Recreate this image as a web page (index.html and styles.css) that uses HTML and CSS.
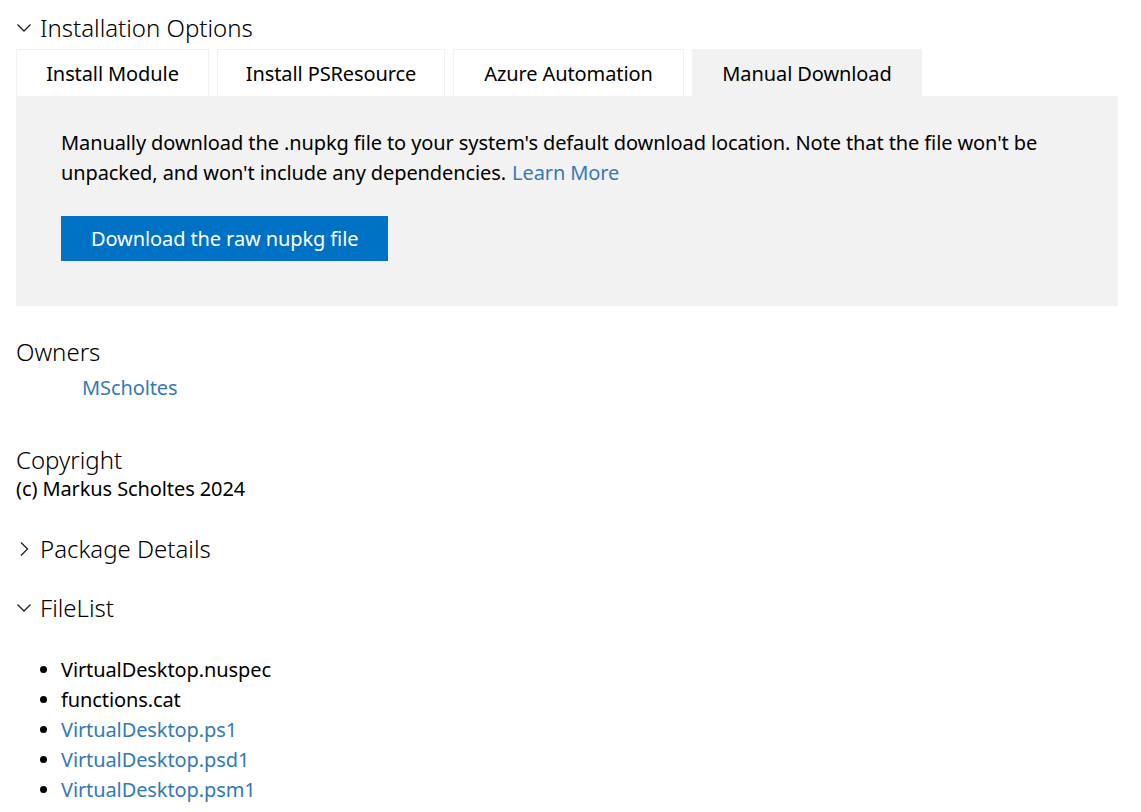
FILE: index.html
```html
<!DOCTYPE html>
<html lang="en">
<head>
<meta charset="utf-8">
<title>VirtualDesktop</title>
<link rel="stylesheet" href="styles.css">
</head>
<body>
  <h2 class="toggle first">
    <svg class="chev" width="16" height="16" viewBox="0 0 16 16"><path d="M1.5 4.5 L8 11 L14.5 4.5" /></svg>
    <span>Installation Options</span>
  </h2>
  <div class="tabs">
    <div class="tab t1">Install Module</div>
    <div class="tab t2">Install PSResource</div>
    <div class="tab t3">Azure Automation</div>
    <div class="tab t4 active">Manual Download</div>
  </div>
  <div class="panel">
    <p class="panel-text">Manually download the .nupkg file to your system's default download location. Note that the file won't be unpacked, and won't include any dependencies. <a class="learn" href="#">Learn More</a></p>
    <button class="btn">Download the raw nupkg file</button>
  </div>

  <h2 class="plain owners">Owners</h2>
  <div class="owner-list"><a href="#">MScholtes</a></div>

  <h2 class="plain copyright">Copyright</h2>
  <p class="text">(c) Markus Scholtes 2024</p>

  <h2 class="toggle pkg">
    <svg class="chev" width="16" height="16" viewBox="0 0 16 16"><path d="M5 1.5 L11.5 8 L5 14.5" /></svg>
    <span>Package Details</span>
  </h2>

  <h2 class="toggle files">
    <svg class="chev" width="16" height="16" viewBox="0 0 16 16"><path d="M1.5 4.5 L8 11 L14.5 4.5" /></svg>
    <span>FileList</span>
  </h2>
  <ul class="filelist">
    <li>VirtualDesktop.nuspec</li>
    <li>functions.cat</li>
    <li><a href="#">VirtualDesktop.ps1</a></li>
    <li><a href="#">VirtualDesktop.psd1</a></li>
    <li><a href="#">VirtualDesktop.psm1</a></li>
  </ul>
</body>
</html>
```

FILE: styles.css
```css
html, body {
  margin: 0;
  padding: 0;
  background: #fff;
}
body {
  padding: 0 23px 0 16px;
  font-family: "Noto Sans", "Open Sans", sans-serif;
  color: #000;
  font-size: 20px;
  letter-spacing: -0.1px;
}
a {
  color: #337ab7;
  text-decoration: none;
}
h2 {
  margin: 0;
  font-size: 24px;
  font-weight: 300;
  line-height: 28px;
  letter-spacing: 0;
}
.toggle {
  display: flex;
  align-items: center;
}
.chev {
  width: 16px;
  height: 16px;
  margin-right: 8px;
  flex: none;
}
.chev path {
  fill: none;
  stroke: #222;
  stroke-width: 1.3;
}
.first { margin-top: 14px; }
.tabs {
  display: flex;
  gap: 8px;
  margin-top: 7px;
}
.tab {
  height: 47px;
  box-sizing: border-box;
  display: flex;
  align-items: center;
  justify-content: center;
  border: 1px solid #f0f0f0;
  border-bottom: none;
  background: #fff;
  font-size: 20px;
}
.t1 { width: 193px; }
.t2 { width: 228px; }
.t3 { width: 231px; }
.t4 { width: 230px; }
.tab.active {
  background: #f2f2f2;
  border-color: #f2f2f2;
}
.panel {
  background: #f2f2f2;
  padding: 32px 45px 45px;
}
.panel-text {
  margin: 0;
  line-height: 30px;
}
.learn {
  display: inline-block;
  margin-left: 1px;
}
.btn {
  margin-top: 28px;
  display: block;
  height: 45px;
  padding: 0 30px;
  border: none;
  background: #0072c6;
  color: #fff;
  font-family: inherit;
  font-size: 20px;
  letter-spacing: -0.1px;
}
.owners { margin-top: 32px; }
.owner-list {
  margin-top: 7px;
  line-height: 30px;
  padding-left: 66px;
}
.copyright { margin-top: 43px; }
.text {
  margin: 0;
  line-height: 30px;
}
.pkg { margin-top: 31px; }
.files { margin-top: 31px; }
.filelist {
  margin: 33px 0 0;
  padding-left: 45px;
  line-height: 30px;
}
```
